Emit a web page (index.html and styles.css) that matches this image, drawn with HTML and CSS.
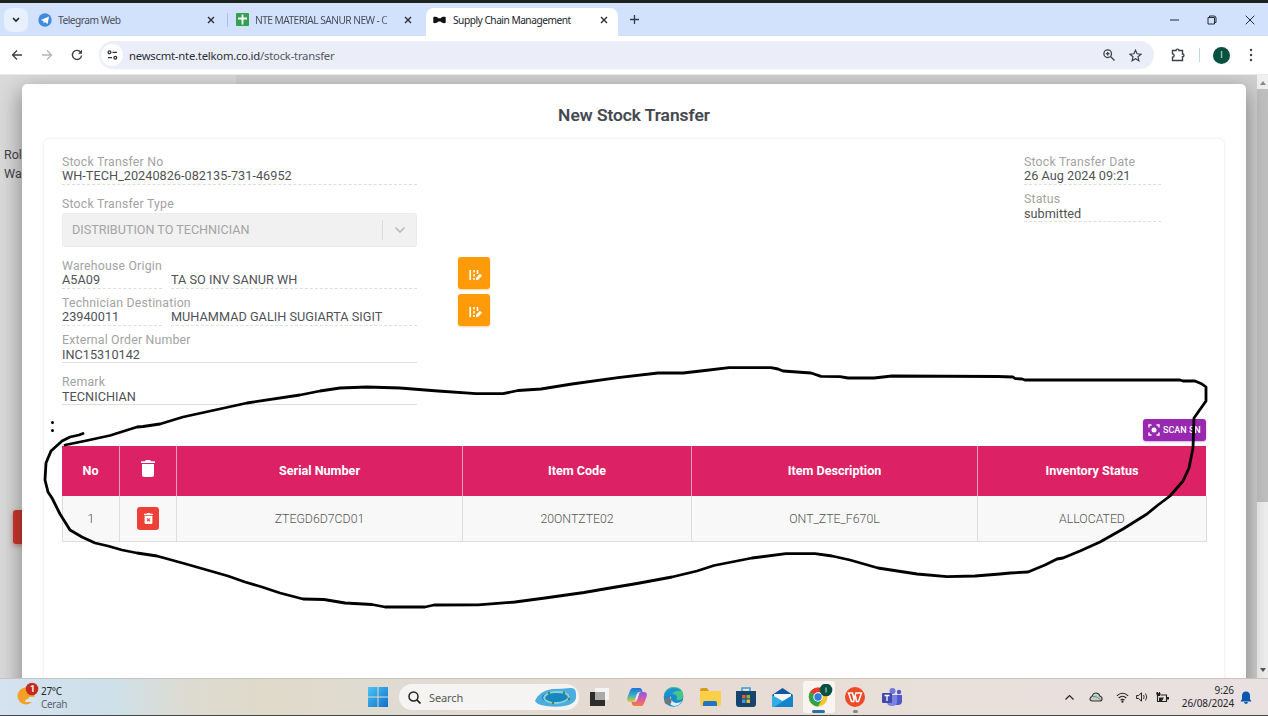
FILE: index.html
```html
<!DOCTYPE html>
<html lang="en">
<head>
<meta charset="utf-8">
<title>Supply Chain Management</title>
<link rel="stylesheet" href="styles.css">
</head>
<body>
<div class="screen">
  <header class="tabstrip">
    <div class="tab-menu"><svg width="8" height="6" viewBox="0 0 8 6"><path d="M1 1l3 3 3-3" fill="none" stroke="#222" stroke-width="1.6"/></svg></div>
    <div class="tab tab-a">
      <svg width="14" height="14" viewBox="0 0 14 14"><circle cx="7" cy="7" r="6.7" fill="#3e8be0"/><path d="M2.8 6.9l8.2-3.4-1.4 7.4-2.7-2-1.3 1.3-.3-2.3z" fill="#fff"/></svg>
      <span class="tab-text t1">Telegram Web</span>
      <svg class="x" width="8" height="8" viewBox="0 0 8 8"><path d="M1 1l6 6M7 1L1 7"/></svg>
    </div>
    <div class="tab tab-b">
      <svg width="13" height="13" viewBox="0 0 13 13"><rect width="13" height="13" rx="1" fill="#35a04f"/><path d="M6.5 1.5v10M2 5.5h9" stroke="#fff" stroke-width="1.8"/></svg>
      <span class="tab-text t2">NTE MATERIAL SANUR NEW - C</span>
      <svg class="x" width="8" height="8" viewBox="0 0 8 8"><path d="M1 1l6 6M7 1L1 7"/></svg>
    </div>
    <div class="tab tab-c">
      <svg width="13" height="8" viewBox="0 0 13 8"><path d="M.3 1.2C1.700.5 4 .8 5.300 2.300h2.400C9 .8 11.300.5 12.700 1.200v5.600c-1.400.7-3.700.3-5-1.300H5.300C4 7.100 1.700 7.500.3 6.800z" fill="#111"/></svg>
      <span class="tab-text t3">Supply Chain Management</span>
      <svg class="x" width="8" height="8" viewBox="0 0 8 8"><path d="M1 1l6 6M7 1L1 7"/></svg>
    </div>
    <svg class="plus" width="9" height="9" viewBox="0 0 9 9"><path d="M4.500 0v9M0 4.500h9" stroke="#333b4a" stroke-width="1.300"/></svg>
    <div class="win">
      <svg width="9" height="10" viewBox="0 0 9 10"><path d="M0 5h9" stroke="#222a3a"/></svg>
      <svg width="10" height="10" viewBox="0 0 10 10"><path d="M1 2.500h6.500V9H1zM2.500 2.500V1H7q2 0 2 2v4.500H7.500" fill="none" stroke="#222a3a"/></svg>
      <svg width="10" height="10" viewBox="0 0 10 10"><path d="M.7.7l8.600 8.600M9.300.7L.7 9.300" stroke="#222a3a"/></svg>
    </div>
  </header>

  <div class="toolbar">
    <div class="nav">
      <svg width="12" height="12" viewBox="0 0 12 12"><path d="M11 6H1.500M6 1.500L1.500 6 6 10.500" fill="none" stroke="#3c3f45" stroke-width="1.300"/></svg>
      <svg width="12" height="12" viewBox="0 0 12 12"><path d="M1 6h9.500M6 1.500L10.500 6 6 10.500" fill="none" stroke="#b4b5b9" stroke-width="1.300"/></svg>
      <svg width="12" height="12" viewBox="0 0 12 12"><path d="M9.800 3.300A4.600 4.600 0 1 0 10.600 6.500" fill="none" stroke="#3c3f45" stroke-width="1.400"/><path d="M11 .8v4H7z" fill="#3c3f45"/></svg>
    </div>
    <div class="omnibox">
      <div class="site"><svg width="11" height="10" viewBox="0 0 11 10"><g fill="none" stroke="#333" stroke-width="1.300"><circle cx="2.500" cy="2.300" r="1.400"/><path d="M5.500 2.300H10M1 7.700h4"/><circle cx="8.300" cy="7.700" r="1.400"/></g></svg></div>
      <span class="url"><span>newscmt-nte.telkom.co.id</span>/stock-transfer</span>
      <svg class="mag" width="12" height="12" viewBox="0 0 12 12"><g fill="none" stroke="#3c4048" stroke-width="1.300"><circle cx="4.700" cy="4.700" r="3.800"/><path d="M7.500 7.500l4 4M2.900 4.700h3.600M4.700 2.900v3.600"/></g></svg>
      <svg class="star" width="13" height="13" viewBox="0 0 13 13"><path d="M6.500 1.200l1.600 3.600 3.900.4-3 2.600.9 3.900-3.400-2-3.400 2 .9-3.900-3-2.600 3.900-.4z" fill="none" stroke="#3c4048" stroke-width="1.200"/></svg>
    </div>
    <svg class="ext" width="14" height="14" viewBox="0 0 14 14"><path d="M1.500 2.500H5C5 .6 8 .6 8 2.500h3.500V6c1.900 0 1.900 2.800 0 2.800v3.700h-10V9.300c2.200 0 2.200-3.400 0-3.400z" fill="none" stroke="#3c4048" stroke-width="1.400"/></svg>
    <i class="sep"></i>
    <div class="avatar">I</div>
    <svg class="dots" width="4" height="14" viewBox="0 0 4 14"><g fill="#3c4048"><circle cx="2" cy="2" r="1.200"/><circle cx="2" cy="7" r="1.200"/><circle cx="2" cy="12" r="1.200"/></g></svg>
  </div>

  <main class="page">
    <div class="sidebar">
      <p class="who">Role<br>Ware</p>
      <div class="redbtn"></div>
    </div>
    <div class="scroll"><span class="up"></span><span class="thumb"></span><span class="down"></span></div>

    <section class="modal">
      <h1>New Stock Transfer</h1>
      <div class="card">
        <div class="form">
          <div class="left">
            <div class="field"><label>Stock Transfer No</label><div class="val dashed">WH-TECH_20240826-082135-731-46952</div></div>
            <div class="type"><label>Stock Transfer Type</label>
              <div class="select"><span>DISTRIBUTION TO TECHNICIAN</span><i></i><svg width="12" height="8" viewBox="0 0 12 8"><path d="M1.500 1.500L6 6l4.500-4.500" fill="none" stroke="#bcbcbc" stroke-width="1.700"/></svg></div>
            </div>
            <div class="line">
              <div class="field"><label>Warehouse Origin</label><div class="pair"><div class="val dashed">A5A09</div><div class="val dashed">TA SO INV SANUR WH</div></div></div>
              <div class="orange"><svg width="13" height="12" viewBox="0 0 13 12"><path d="M1.200 1v10M5 1v2.500M5 5v2.500M5 9v2M8.500 1v4" stroke="#fff" stroke-width="1.600"/><path d="M7 11V8.800l4-4 2 2-4 4.200z" fill="#fff"/></svg></div>
            </div>
            <div class="line">
              <div class="field"><label>Technician Destination</label><div class="pair"><div class="val dashed">23940011</div><div class="val dashed">MUHAMMAD GALIH SUGIARTA SIGIT</div></div></div>
              <div class="orange"><svg width="13" height="12" viewBox="0 0 13 12"><path d="M1.200 1v10M5 1v2.500M5 5v2.500M5 9v2M8.500 1v4" stroke="#fff" stroke-width="1.600"/><path d="M7 11V8.800l4-4 2 2-4 4.200z" fill="#fff"/></svg></div>
            </div>
            <div class="field ext-order"><label>External Order Number</label><div class="val low">INC15310142</div></div>
            <div class="field remark"><label>Remark</label><div class="val low">TECNICHIAN</div></div>
          </div>
          <div class="right">
            <div class="field"><label>Stock Transfer Date</label><div class="val dashed">26 Aug 2024 09:21</div></div>
            <div class="field"><label>Status</label><div class="val dashed low">submitted</div></div>
          </div>
        </div>
        <div class="actions"><button class="scan"><svg width="12" height="12" viewBox="0 0 12 12"><path d="M1 3.500V1h2.500M8.500 1H11v2.500M11 8.500V11H8.500M3.500 11H1V8.500" fill="none" stroke="#fff" stroke-width="1.400"/><circle cx="6" cy="6" r="2.500" fill="#fff"/></svg>SCAN SN</button></div>
        <div class="grid head">
          <div>No</div>
          <div><svg class="trash" width="14" height="17" viewBox="0 0 14 17"><path d="M0 1.200h4L5 0h4l1 1.200h4V3H0zM1 4h12v11q0 2-2 2H3q-2 0-2-2z" fill="#fff"/></svg></div>
          <div>Serial Number</div><div>Item Code</div><div>Item Description</div><div>Inventory Status</div>
        </div>
        <div class="grid row">
          <div>1</div>
          <div><span class="del"><svg width="9" height="11" viewBox="0 0 9 11"><path d="M0 .8h2.500L3.200 0h2.600l.7.800H9V2H0zM.6 2.700h7.800v7q0 1.300-1.300 1.300H1.900Q.6 11 .6 9.700z" fill="#fff"/><path d="M3 5.300l3 3M6 5.300l-3 3" stroke="#ee4036" stroke-width="1.100"/></svg></span></div>
          <div>ZTEGD6D7CD01</div><div>20ONTZTE02</div><div>ONT_ZTE_F670L</div><div>ALLOCATED</div>
        </div>
      </div>
    </section>
  </main>

  <footer class="taskbar">
    <div class="weather">
      <svg width="22" height="24" viewBox="0 0 22 24"><circle cx="9" cy="14" r="8.500" fill="#f4a024"/><path d="M8 20q0-3 3-3 1-3 4-2 2-1 3 2 2 3-1 3z" fill="#d8e5f8"/><circle cx="15" cy="7" r="6.300" fill="#c42b1e"/><text x="13" y="10" class="badge-n">1</text></svg>
      <div><p>27°C</p><p class="sub">Cerah</p></div>
    </div>
    <div class="dock">
      <svg class="start" width="20" height="20" viewBox="0 0 20 20"><defs><linearGradient id="w" x1="0" y1="0" x2="1" y2="1"><stop offset="0" stop-color="#4cc3f3"/><stop offset="1" stop-color="#0c70cc"/></linearGradient></defs><path d="M0 0h9.500v9.500H0zM10.500 0H20v9.500h-9.500zM0 10.500h9.500V20H0zM10.500 10.500H20V20h-9.500z" fill="url(#w)"/></svg>
      <div class="search">
        <svg width="13" height="13" viewBox="0 0 13 13"><circle cx="5.500" cy="5.500" r="4.500" fill="none" stroke="#222" stroke-width="1.500"/><path d="M8.800 8.800l3.700 3.700" stroke="#222" stroke-width="1.700"/></svg>
        <span>Search</span>
        <svg width="44" height="20" viewBox="0 0 44 20"><path d="M1 14Q5 4 18 2q10 0 18-1 6-1 6 6 1 7-5 10-9 4-25 2Q3 18 1 14z" fill="#4caee0"/><ellipse cx="22" cy="10.500" rx="14" ry="5.500" fill="#1588bd"/><path d="M10 11q2-6 12-6 12 0 13 5-2 5-12 6-11 0-13-5z" fill="none" stroke="#8fd0d8" stroke-width="1.800"/><g fill="#547f48"><circle cx="15" cy="6" r="1.200"/><circle cx="30" cy="6" r="1.200"/><circle cx="35" cy="12" r="1.200"/><circle cx="19" cy="16" r="1.200"/></g></svg>
      </div>
      <svg class="i-task" width="20" height="20" viewBox="0 0 20 20"><path d="M0 5h15v14H0z" fill="#2c2c2c"/><path d="M5 1h14v12H5z" fill="#f6f4f2"/><path d="M5 5h10v8H5z" fill="#aaa"/></svg>
      <svg class="i-cop" width="20" height="20" viewBox="0 0 20 20"><defs><linearGradient id="ca" x1="0" y1="0" x2="0" y2="1"><stop offset="0" stop-color="#2470d8"/><stop offset=".5" stop-color="#2fb0c8"/><stop offset="1" stop-color="#e8c832"/></linearGradient><linearGradient id="cb" x1="0" y1="0" x2="0" y2="1"><stop offset="0" stop-color="#8a5be0"/><stop offset=".55" stop-color="#dd5aa4"/><stop offset="1" stop-color="#f58135"/></linearGradient></defs><path d="M5.500 1h7q2.500 0 3 4h-3q-2 0-2.500 2l-2 6q-.6 2-2.500 2H3q-4 0-2.500-5L3 3.500Q4 1 5.500 1z" fill="url(#ca)"/><path d="M14.500 19h-7q-2.500 0-3-4h3q2 0 2.500-2l2-6q.6-2 2.500-2H17q4 0 2.500 5L17 16.500q-1 2.500-2.500 2.500z" fill="url(#cb)"/><path d="M8.300 12.500l1.700-5.500h1.800L10 12.500z" fill="#f4e9f2"/></svg>
      <svg class="i-edge" width="21" height="20" viewBox="0 0 21 20"><circle cx="10.500" cy="10" r="9.800" fill="#178bcb"/><path d="M1 9Q2 0 11 0t9.500 9q-1 5-7 4 2-6-4-6-5 0-8.500 2z" fill="#43c58d"/><path d="M1 9Q3 1 11 1q5 0 7 3-6-1-9 3z" fill="#1d92cf"/><path d="M8 9q-1 6 5 7 4 0 6-2-4 7-11 4-4-4 0-9z" fill="#d9eef8"/><circle cx="5" cy="14" r="3.500" fill="#6c7780"/></svg>
      <svg class="i-fold" width="21" height="19" viewBox="0 0 21 19"><path d="M0 2q0-2 2-2h5l2 3H0z" fill="#d89a20"/><path d="M0 3h21v13q0 2-2 2H2q-2 0-2-2z" fill="#fbcf48"/><path d="M3 18v-3q0-2 2-2h10q2 0 2 2v3z" fill="#2174c4"/></svg>
      <svg class="i-store" width="20" height="20" viewBox="0 0 20 20"><path d="M6 5V1h8v4" fill="none" stroke="#31a3da" stroke-width="1.600"/><path d="M0 4h20v13q0 3-3 3H3q-3 0-3-3z" fill="#17436f"/><path d="M6 8h3.500v3.500H6z" fill="#e9573d"/><path d="M10.500 8H14v3.500h-3.500z" fill="#7db93c"/><path d="M6 12.500h3.500V16H6z" fill="#35a3e2"/><path d="M10.500 12.500H14V16h-3.500z" fill="#f4bc31"/></svg>
      <svg class="i-mail" width="21" height="19" viewBox="0 0 21 19"><path d="M0 7L10.500 0 21 7v11H0z" fill="#13579d"/><path d="M2 6h17v7H2z" fill="#f7f7f7"/><path d="M0 7l10.500 6L21 7v12H0z" fill="#33ace8"/><path d="M21 7v12H2z" fill="#1683cd"/></svg>
      <div class="chrome-box">
        <svg width="25" height="24" viewBox="0 0 25 24"><circle cx="10" cy="13" r="9.500" fill="#f8c52c"/><path d="M10 13L1.800 8.200Q5 3.500 10 3.500t8.500 5H10z" fill="#e33b2e"/><path d="M10 13l-8.200-4.800Q-1 15 4 20q3 2.500 6 2.500l4-7z" fill="#2ba24c"/><circle cx="10" cy="13" r="4.700" fill="#fff"/><circle cx="10" cy="13" r="3.700" fill="#2f7de4"/><circle cx="18" cy="6" r="6.300" fill="#08503f"/><path d="M18 3.500v5" stroke="#cfe3dc"/></svg>
        <i></i>
      </div>
      <div class="wps"><svg width="20" height="20" viewBox="0 0 20 20"><circle cx="10" cy="10" r="10" fill="#ee4a27"/><path d="M3.500 6h4l1.500 6 2-6h5.500l-3 8.500h-2L10.500 9 8.500 14.500h-2z" fill="none" stroke="#fff" stroke-width="1.500"/></svg><i></i></div>
      <svg class="i-teams" width="20" height="19" viewBox="0 0 20 19"><circle cx="10.500" cy="3" r="3" fill="#6f78d8"/><circle cx="17" cy="4" r="2.200" fill="#5059c9"/><path d="M12 7h8v6q0 4-4 4h-4z" fill="#5059c9"/><path d="M5 7h10v7q0 4-5 4t-5-4z" fill="#7b83eb"/><rect y="5" width="10" height="10" rx="1" fill="#4249ac"/><path d="M2.500 7.500h5M5 7.500v5.500" stroke="#fff" stroke-width="1.300"/></svg>
    </div>
    <div class="tray">
      <svg width="9" height="6" viewBox="0 0 9 6"><path d="M.5 5.500l4-4 4 4" fill="none" stroke="#222" stroke-width="1.200"/></svg>
      <svg class="cloud" width="14" height="10" viewBox="0 0 14 10"><path d="M3.500 9Q1 9 1 6.800 1 5 3 4.500 4 1 7 1t4 3.200q2.300.5 2 2.700Q13 9 10.500 9z" fill="#c4cfca" stroke="#333" stroke-width="1.100"/><path d="M3 4.500q4-1 8.500 3" fill="none" stroke="#73857b"/></svg>
      <svg class="wifi" width="13" height="11" viewBox="0 0 13 11"><path d="M.8 3.800q5.700-5 11.400 0M2.700 6q3.800-3.400 7.600 0M4.500 8.200q2-1.700 4 0" fill="none" stroke="#222" stroke-width="1.100"/><circle cx="6.500" cy="9.700" r="1.100" fill="#222"/></svg>
      <svg class="vol" width="12" height="10" viewBox="0 0 12 10"><path d="M.6 3.500h2L5.500.8v8.400L2.600 6.500h-2z" fill="none" stroke="#222" stroke-width="1"/><path d="M7.500 3q1.300 2 0 4M9.500 1.500q2.500 3.500 0 7" fill="none" stroke="#222" stroke-width=".9"/></svg>
      <svg class="bat" width="13" height="11" viewBox="0 0 13 11"><path d="M1.500 4v5.500h9V3H5" fill="none" stroke="#222" stroke-width="1.100"/><path d="M3 5.500h5L6 9H3zM11 5h2v2.500h-2zM0 .5h1v-.5h1v1h1V0h1v1.500h1L4 4H1z" fill="#222"/></svg>
      <div class="clock"><p>9:26</p><p>26/08/2024</p></div>
      <svg class="bell" width="12" height="13" viewBox="0 0 12 13"><path d="M6 .5q4 0 4 4.500v3l1.500 2.500H.5L2 8V5Q2 .5 6 .5zM4 11h4q-.5 2-2 2t-2-2z" fill="#0b57ad"/></svg>
    </div>
  </footer>

  <svg class="ink" width="1268" height="716" viewBox="0 0 1268 716"><polyline points="83,433.500 79,435 70,437 62,441 51,451 46,463 45,480 48,492 52,498 60,514 70,530 82,537 95,543 108,546 122,550 137,553 157,556 186,564 228,576 245,582 262,587 280,593 303,599 324,599.500 345,603 372,604.500 385,607 425,607 434,605 478,604.800 515,602 545,598 584,592.500 610,588 637,583.500 672,577 697,571 714,565.500 752,558 786,553.700 815,553.700 832,556 850,560 878,568 917,574 947,576.700 975,576 1000,574 1010,573 1028,572 1045,565 1057,559 1063,558 1080,551 1100,542 1123,529 1147,514 1158,505 1170,496 1183,481 1189,468 1193,448 1194,418 1206,401 1206,387 1202,384 1195,381 1183,381 1180,380 1025,380 1022,379 1015,378.500 1013,377 998,376.500 892,376 874,378 848,378 840,376.700 821,376.300 811,373 783,371 778,369 771,367.700 729,367.700 705,370.500 683,373 658,373 618,377.700 572,384 541,389 518,390.500 503,393.700 476,393.700 438,391 400,388 367,387 340,388 320,391 300,395 247,403 183,417 160,424 143,426.500 137,427 110,435.500 87,440.500 65,445"/><circle cx="52.500" cy="422.500" r="1.500"/><circle cx="52.500" cy="430.500" r="1.500"/></svg>
</div>
</body>
</html>
```
FILE: styles.css
```css
* { box-sizing: border-box; }
body, p, h1 { margin: 0; }
svg { display: block; flex: none; }
.screen { position: relative; width: 1268px; height: 716px; overflow: hidden; display: flex; flex-direction: column; font-family: Roboto, "Liberation Sans", sans-serif; background: #fff; }

.tabstrip { height: 36px; border-top: 3px solid #1c2220; background: #d3e2fc; display: flex; align-items: center; font-family: "Noto Sans", "Open Sans", sans-serif; flex: none; }
.tab-menu { width: 24px; height: 24px; border-radius: 8px; background: #e9f0fd; margin-left: 4px; display: flex; align-items: center; justify-content: center; }
.tab { height: 100%; display: flex; align-items: center; font-size: 10.2px; letter-spacing: -.5px; color: #484e5a; white-space: nowrap; }
.tab-text { margin-left: 6px; flex: 1; }
.x path { stroke: #2a2d33; stroke-width: 1.400; fill: none; }
.tab-a { width: 177px; margin-left: 10px; }
.tab-b { width: 185px; margin-left: 12px; padding-left: 9px; position: relative; }
.tab-b::before { content: ""; position: absolute; left: 0; top: 10px; width: 1px; height: 14px; background: #a9bfe6; }
.t2 { -webkit-mask-image: linear-gradient(90deg, #000 88%, rgba(0,0,0,.2) 100%); margin-right: 6px; letter-spacing: -.55px; }
.tab-c { height: 28px; margin: 5px 0 0 14px; width: 192px; padding: 0 10px 4px 7px; background: #fff; border-radius: 8px 8px 0 0; color: #23262c; }
.t3 { margin-left: 7px; }
.plus { margin-left: 12px; }
.win { margin-left: auto; display: flex; gap: 28px; margin-right: 13px; }

.toolbar { height: 39px; flex: none; background: #fff; border-bottom: 1px solid #e9e9e9; display: flex; align-items: center; }
.nav { display: flex; gap: 18px; margin-left: 11px; width: 88px; }
.omnibox { width: 1055px; height: 28px; border-radius: 14px; background: #ebeef9; display: flex; align-items: center; padding: 0 12px 0 2px; }
.site { width: 22px; height: 22px; border-radius: 50%; background: #fff; display: flex; align-items: center; justify-content: center; }
.url { font: 11.3px "Noto Sans", "Open Sans", sans-serif; letter-spacing: -.23px; color: #555963; margin-left: 6px; flex: 1; }
.url span { color: #2c2f36; }
.star { margin-left: 14px; }
.ext { margin-left: 17px; }
.sep { width: 1px; height: 14px; background: #bfd6e8; margin-left: 14px; }
.avatar { width: 17px; height: 17px; border-radius: 50%; background: #085140; color: #d5e5e0; font-size: 9px; line-height: 17px; text-align: center; margin-left: 13px; }
.dots { margin-left: 19px; }

.page { position: relative; height: 603px; flex: none; background: #d1d1d1; overflow: hidden; }
.sidebar { width: 236px; height: 100%; background: #dadada; padding-top: 70px; }
.who { padding-left: 4px; font-size: 12.500px; line-height: 19px; color: #444; }
.redbtn { width: 60px; height: 34px; margin: 327px 0 0 13px; background: #cf3830; border-radius: 3px; box-shadow: 0 2px 5px rgba(180,60,50,.5); }
.scroll { position: absolute; right: 0; top: 0; width: 11px; height: 100%; background: #f0f0f0; display: flex; flex-direction: column; align-items: center; }
.thumb { width: 11px; height: 413px; background: #c1c1c1; margin-top: 4px; }
.up { margin-top: 6px; border: 3px solid transparent; border-top: 0; border-bottom: 4px solid #8a8a8a; }
.down { margin-top: auto; margin-bottom: 6px; border: 3px solid transparent; border-bottom: 0; border-top: 4px solid #555; }

.modal { position: absolute; left: 22px; top: 9px; width: 1224px; height: 620px; background: #fff; border-radius: 5px; box-shadow: 0 8px 22px 2px rgba(0,0,0,.36); padding: 20px 21px 0; display: flex; flex-direction: column; }
.modal h1 { font-size: 17.35px; line-height: 22px; font-weight: 500; -webkit-text-stroke: .2px; color: #42464d; text-align: center; }
.card { margin-top: 12px; flex: 1; border: 1px solid #f4f4f4; border-radius: 6px; box-shadow: 0 0 3px rgba(0,0,0,.05); padding: 15px 18px 0; }
.form { display: flex; justify-content: space-between; height: 264px; }
label { display: block; height: 14px; font-size: 12.300px; line-height: 16px; color: #a3a3a3; letter-spacing: .2px; white-space: nowrap; }
.val { height: 17px; font-size: 12.700px; line-height: 15px; color: #505256; border-bottom: 1px solid #dedede; white-space: nowrap; letter-spacing: .02px; }
.val.low { line-height: 17px; }
.dashed { border-bottom-style: dashed; }
.left { width: 430px; }
.field { width: 355px; }
.type { margin-top: 11px; }
.select { margin-top: 3px; width: 355px; height: 34px; background: #f1f1f1; border: 1px solid #ececec; border-radius: 3px; display: flex; align-items: center; padding: 0 10px 0 9px; font-size: 12.600px; color: #a4a4a4; }
.select span { flex: 1; margin-top: -2px; }
.select i { width: 1px; height: 20px; background: #dcdcdc; margin-right: 11px; }
.line { display: flex; height: 31px; margin-top: 11px; }
.line + .line { margin-top: 6px; }
.pair { display: grid; grid-template-columns: 100px 246px; gap: 9px; }
.orange { width: 32px; height: 32px; margin: -1px 0 0 40.5px; background: #ff9b08; border-radius: 3px; display: flex; align-items: center; justify-content: center; padding: 3px 0 0 4px; box-shadow: 0 1px 2px rgba(255,152,0,.4); }
.ext-order { margin-top: 6px; }
.remark { margin-top: 11px; }
.right { width: 182px; display: flex; flex-direction: column; gap: 6px; }
.right .field { width: 137px; }
.actions { display: flex; justify-content: flex-end; height: 28px; padding-top: 1px; }
.scan { width: 63px; height: 22px; border: 0; border-radius: 3px; background: #9828b0; color: #fff; font: 500 9px Roboto, sans-serif; letter-spacing: 0; padding: 0 4px 0 5px; display: flex; align-items: center; gap: 3px; white-space: nowrap; box-shadow: 0 1px 2px rgba(156,39,176,.4); }
.grid { display: grid; grid-template-columns: 57px 57px 286px 229px 286px 229px; width: 1144px; text-align: center; }
.grid > div { display: flex; align-items: center; justify-content: center; }
.head { height: 50px; background: #dc2265; color: #fff; font-weight: 700; font-size: 12.600px; padding-bottom: 2px; }
.head > div { height: 50px; padding-bottom: 2px; }
.head > div + div { border-left: 1px solid #eca0bd; }
.row { height: 46px; grid-template-columns: 56px 57px 286px 229px 286px 229px; background: #f8f8f8; color: #555; font-weight: 300; font-size: 12.300px; border: 1px solid #ddd; border-top: 0; width: 1145px; }
.row > div + div { border-left: 1px solid #ddd; }
.trash { margin-top: -4px; }
.del { width: 22px; height: 23px; border-radius: 3px; background: #ee4036; display: flex; align-items: center; justify-content: center; }

.taskbar { height: 38px; flex: none; border-top: 1px solid #c7c4c0; border-bottom: 1px solid #454545; background: linear-gradient(90deg, #d5e2ef 0, #cde0ea 110px, #dddbd0 190px, #dfdaca 270px, #dfdbd2 400px, #e6dad2 640px, #e9dfd9 900px, #e9e1e1 1268px); display: flex; font-family: "Noto Sans", "Open Sans", sans-serif; font-size: 10px; letter-spacing: -.1px; color: #24262a; }
.weather { display: flex; margin-left: 17px; padding-top: 3px; width: 351px; line-height: 13px; }
.weather div { margin: 3px 0 0 2px; letter-spacing: -.3px; }
.sub { color: #5c646c; }
.badge-n { font: 700 9px Roboto, sans-serif; fill: #fff; }
.dock { display: flex; align-items: center; }
.search { width: 180px; height: 26px; border-radius: 13px; background: #f6f4f2; margin-left: 11px; margin-right: 11px; padding: 0 1px 0 9px; display: flex; align-items: center; font-size: 11px; color: #55575a; }
.search span { margin-left: 8px; flex: 1; }
.i-cop { margin-left: 17px; }
.i-edge { margin-left: 16px; }
.i-fold { margin-left: 16px; }
.i-store { margin-left: 15px; }
.i-mail { margin-left: 16px; }
.chrome-box { position: relative; margin-left: 10px; width: 32px; height: 32px; background: #f7f4f2; border-radius: 3px; padding: 3px 0 0 5px; }
.chrome-box i { position: absolute; left: 9px; bottom: 0; width: 13px; height: 3px; border-radius: 2px; background: #2b6eae; }
.wps { position: relative; margin-left: 10px; }
.wps i { position: absolute; left: 8px; bottom: -6px; width: 5px; height: 3px; border-radius: 2px; background: #888; }
.i-teams { margin-left: 17px; }
.tray { display: flex; align-items: center; margin-left: auto; }
.cloud { margin-left: 15px; }
.wifi { margin-left: 13px; }
.vol { margin-left: 7px; }
.bat { margin-left: 8px; }
.clock { width: 65px; text-align: right; line-height: 13px; }
.bell { margin: 0 16px 0 6px; }

.ink { position: absolute; left: 0; top: 0; fill: #000; }
.ink polyline { fill: none; stroke: #000; stroke-width: 2.800; stroke-linejoin: round; stroke-linecap: round; }
```
